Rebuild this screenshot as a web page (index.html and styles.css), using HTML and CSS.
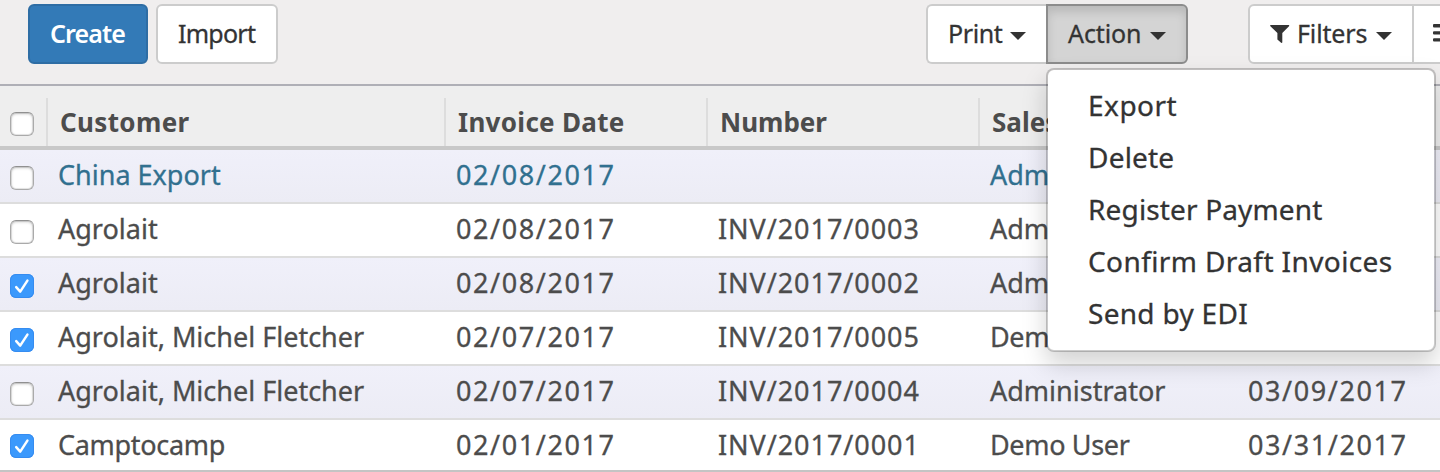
FILE: index.html
```html
<!DOCTYPE html>
<html lang="en">
<head>
<meta charset="utf-8">
<title>Customer Invoices</title>
<link rel="stylesheet" href="styles.css">
</head>
<body>
<header class="toolbar">
  <button class="btn btn-primary create">Create</button>
  <button class="btn import">Import</button>
  <div class="group actions">
    <button class="btn print">Print<i class="caret"></i></button>
    <div class="dropdown">
      <button class="btn active action">Action<i class="caret"></i></button>
      <ul class="menu">
        <li class="m-export">Export</li>
        <li class="m-delete">Delete</li>
        <li class="m-register">Register Payment</li>
        <li class="m-confirm">Confirm Draft Invoices</li>
        <li class="m-send">Send by EDI</li>
      </ul>
    </div>
  </div>
  <div class="group search">
    <button class="btn filters"><svg class="funnel" viewBox="0 0 20 20"><path d="M.6 1h18.2q.8.6.2 1.300L12.300 9v9.600q-.5.600-1.200.2L7.400 15.600V9L.4 2.300Q-.2 1.600.6 1z"/></svg>Filters<i class="caret"></i></button>
    <button class="btn groupby"><svg class="bars" viewBox="0 0 20 18"><path d="M1 0h18v3.400H1q-1 0-1-1V1q0-1 1-1zM1 7.200h18v3.400H1q-1 0-1-1V8.200q0-1 1-1zM1 14.200h18v3.400H1q-1 0-1-1v-1.400q0-1 1-1z"/></svg></button>
  </div>
</header>
<main class="list">
  <div class="row head"><span class="pick"><i class="box"></i></span><span class="cell customer">Customer</span><span class="cell date">Invoice Date</span><span class="cell number">Number</span><span class="cell person">Salesperson</span><span class="cell due"></span></div>
  <div class="row draft"><span class="pick"><i class="box"></i></span><span class="cell customer">China Export</span><span class="cell date">02/08/2017</span><span class="cell number"></span><span class="cell person">Administrator</span><span class="cell due"></span></div>
  <div class="row"><span class="pick"><i class="box"></i></span><span class="cell customer">Agrolait</span><span class="cell date">02/08/2017</span><span class="cell number">INV/2017/0003</span><span class="cell person">Administrator</span><span class="cell due"></span></div>
  <div class="row"><span class="pick"><i class="box checked"><svg viewBox="0 0 24 24"><path d="M6.200 13.200 10.200 17.600 17.400 6.600"/></svg></i></span><span class="cell customer">Agrolait</span><span class="cell date">02/08/2017</span><span class="cell number">INV/2017/0002</span><span class="cell person">Administrator</span><span class="cell due"></span></div>
  <div class="row"><span class="pick"><i class="box checked"><svg viewBox="0 0 24 24"><path d="M6.200 13.200 10.200 17.600 17.400 6.600"/></svg></i></span><span class="cell customer">Agrolait, Michel Fletcher</span><span class="cell date">02/07/2017</span><span class="cell number">INV/2017/0005</span><span class="cell person demo">Demo User</span><span class="cell due"></span></div>
  <div class="row"><span class="pick"><i class="box"></i></span><span class="cell customer">Agrolait, Michel Fletcher</span><span class="cell date">02/07/2017</span><span class="cell number">INV/2017/0004</span><span class="cell person">Administrator</span><span class="cell due">03/09/2017</span></div>
  <div class="row last"><span class="pick"><i class="box checked"><svg viewBox="0 0 24 24"><path d="M6.200 13.200 10.200 17.600 17.400 6.600"/></svg></i></span><span class="cell customer">Camptocamp</span><span class="cell date">02/01/2017</span><span class="cell number">INV/2017/0001</span><span class="cell person demo">Demo User</span><span class="cell due">03/31/2017</span></div>
</main>
</body>
</html>
```

FILE: styles.css
```css
* { box-sizing: border-box; }
body {
  margin: 0;
  width: 1440px;
  height: 472px;
  overflow: hidden;
  background: #fff;
  color: #4c4c4c;
  font-family: "Noto Sans", "Open Sans", sans-serif;
  -webkit-text-stroke: 0.3px;
}
.toolbar {
  display: flex;
  height: 86px;
  padding: 4px 0 0 28px;
  background: #f0eeee;
  border-bottom: 2px solid #afafb6;
}
.btn {
  display: flex;
  flex: none;
  align-items: center;
  height: 60px;
  margin: 0;
  padding: 0 0 2px 20px;
  border: 2px solid #ccc;
  border-radius: 6px;
  background: #fff;
  color: #333;
  font: 25px/56px "Noto Sans", "Open Sans", sans-serif;
  -webkit-text-stroke: 0.3px;
  white-space: nowrap;
}
.btn-primary { background: #337ab7; border-color: #2e6da4; color: #fff; font-weight: 600; -webkit-text-stroke: 0; }
.create { width: 120px; letter-spacing: -0.9px; }
.import { width: 122px; margin-left: 8px; letter-spacing: -0.75px; }
.group { display: flex; flex: none; }
.actions { margin-left: 648px; }
.search { margin-left: 60px; }
.print { width: 120px; border-right: 0; border-radius: 6px 0 0 6px; letter-spacing: -0.4px; }
.action { width: 142px; border-radius: 0 6px 6px 0; letter-spacing: -0.1px; }
.active { background: #d4d4d4; border-color: #8c8c8c; box-shadow: inset 0 6px 10px rgba(0,0,0,.125); }
.filters { width: 166px; border-radius: 6px 0 0 6px; letter-spacing: -0.15px; }
.groupby { width: 80px; border-left: 0; border-radius: 0 6px 6px 0; padding-left: 19px; }
.caret {
  width: 0;
  margin: 6px 0 0 9px;
  border: 8px solid transparent;
  border-top-color: #333;
  border-bottom: 0;
}
.print .caret { margin-left: 8px; }
.funnel { width: 20px; height: 20px; margin: 2px 7px 0 0; fill: #333; }
.bars { width: 20px; height: 18px; fill: #333; }
.dropdown { position: relative; }
.menu {
  position: absolute;
  z-index: 2;
  top: 64px;
  left: 0;
  width: 390px;
  height: 284px;
  margin: 0;
  padding: 9px 0 0 40px;
  list-style: none;
  background: #fff;
  background-clip: padding-box;
  border: 2px solid rgba(0,0,0,.2);
  border-radius: 8px;
  box-shadow: 0 12px 24px rgba(0,0,0,.175);
  color: #333;
  font-size: 28px;
  line-height: 52px;
  white-space: nowrap;
}
.m-export { letter-spacing: 0.5px; }
.m-delete { letter-spacing: 0.2px; }
.m-register { letter-spacing: 0.15px; }
.m-confirm { letter-spacing: 0.4px; }
.m-send { letter-spacing: 0.3px; }
.row {
  display: grid;
  grid-template-columns: 48px 398px 262px 272px 258px 202px;
  height: 54px;
  border-bottom: 2px solid #ddd;
  font-size: 27px;
  line-height: 49px;
  white-space: nowrap;
}
.row:nth-child(even) { background: linear-gradient(#f0f0fa, #ececf5); }
.row.last { height: 52px; border-bottom-color: #c4c4c4; }
.row.head {
  height: 64px;
  padding-top: 12px;
  background: #eee;
  border-bottom: 4px solid #c8c8c8;
  font-size: 26px;
  font-weight: 700;
  line-height: 48px;
  -webkit-text-stroke: 0;
}
.pick { padding: 16px 0 0 10px; line-height: 0; }
.last .pick { padding-top: 14px; }
.head .pick { padding-top: 14px; border-right: 2px solid #ddd; }
.cell { padding-left: 10px; }
.head .cell { padding-left: 12px; border-right: 2px solid #ddd; }
.head .due { border-right: 0; }
.date, .due { letter-spacing: 1.6px; }
.number { letter-spacing: 0.95px; }
.demo { letter-spacing: -0.35px; }
.last .customer { letter-spacing: -0.3px; }
.head .customer { letter-spacing: 0.35px; }
.head .date { letter-spacing: 0.3px; }
.head .number { letter-spacing: 0; }
.box {
  display: block;
  width: 24px;
  height: 24px;
  border: 1px solid #aaa;
  border-top-color: #909090;
  border-radius: 6px;
  background: #fff;
  box-shadow: inset 0 1px 3px rgba(0,0,0,.22), inset 0 0 0 1px rgba(0,0,0,.08);
}
.box.checked { border: 0; background: #3b99fc; box-shadow: inset 0 0 0 1px #368cf0; }
.box svg { width: 24px; height: 24px; fill: none; stroke: #fff; stroke-width: 2.500; stroke-linecap: round; stroke-linejoin: round; }
.draft { color: #31708f; }
```
